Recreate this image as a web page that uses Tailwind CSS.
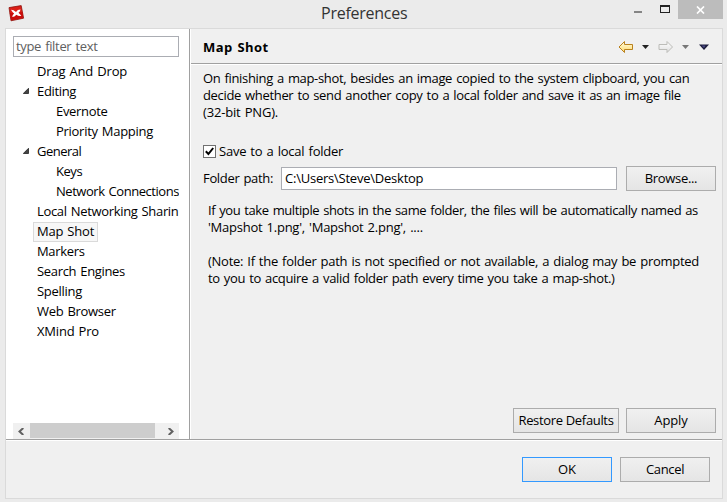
<!DOCTYPE html>
<html lang="en">
<head>
<meta charset="utf-8">
<title>Preferences</title>
<script src="https://cdn.jsdelivr.net/npm/@tailwindcss/browser@4"></script>
</head>
<body class="w-[727px] h-[502px] overflow-hidden bg-[#ebebeb] text-black text-[13px] tracking-[-0.33px] [word-spacing:1px] font-['Open_Sans','Noto_Sans',sans-serif]">
<div class="flex flex-col w-[727px] h-[502px]">
  <header class="flex h-[28px] shrink-0">
    <div class="w-[321px] pl-[8px] pt-[5px]">
      <svg width="17" height="17" viewBox="0 0 17 17">
        <path d="M1 2.600 13.200.6 15.600 13.200 3 15.800z" fill="#dc1f18" stroke="#8d1712" stroke-width=".8"/>
        <path d="M1.700 8.200 14.500 7 15.200 12.900 3.300 15.200z" fill="#c90d0b"/>
        <path d="M3 4.700q2.600 0 5 2.200Q9.700 4.500 12.500 4.600q-.4 2.200-2 3.200 1.600 1.500 2.800 3.100-3.100.4-4.900-1.100Q6.500 12 4.200 12q.3-2.300 1.900-3.500Q4.200 6.900 3 4.700z" fill="#fff"/>
      </svg>
    </div>
    <h1 class="flex-1 text-[16px] leading-[27px] tracking-[-0.25px] text-[#333]">Preferences</h1>
    <div class="flex">
      <svg class="mr-[5px]" width="40" height="20" viewBox="0 0 40 20" shape-rendering="crispEdges"><path d="M1 11h8v2H1z" fill="#858585"/><path d="M27 5h10v8H27zM28 7v5h8V7z" fill="#222" fill-rule="evenodd"/></svg>
      <div class="mr-[4px] flex h-[19px] w-[45px] items-center justify-center bg-[#bcbcbc]">
        <svg width="9" height="8" viewBox="0 0 9 8"><path d="M1 .5 8 7.500M8 .5 1 7.500" stroke="#fff" stroke-width="1.700"/></svg>
      </div>
    </div>
  </header>

  <main class="ml-[5px] flex h-[471px] w-[718px] flex-col border border-[#dadada] bg-[#f0f0f0]">
    <div class="flex h-[410px] shrink-0">
      <aside class="flex w-[184px] shrink-0 flex-col border-r border-[#a0a0a0] bg-white pl-[7px] pt-[7px]">
        <div class="h-[21px] w-[166px] border border-[#abadb3] pl-[2px] leading-[19px] text-[#606060]">type filter text</div>
        <ul class="mt-[4px] h-[362px] w-[166px] overflow-hidden whitespace-nowrap leading-[20px]">
          <li class="pl-[24px] tracking-[-0.18px]">Drag And Drop</li>
          <li class="flex items-center pl-[10px]"><svg class="mr-[8px]" width="6" height="6" viewBox="0 0 6 6"><path d="M5.500.3v5.200H.3z" fill="#444" stroke="#222" stroke-width=".8"/></svg>Editing</li>
          <li class="pl-[43px]">Evernote</li>
          <li class="pl-[43px] tracking-[-0.28px]">Priority Mapping</li>
          <li class="flex items-center pl-[10px] tracking-[-0.5px]"><svg class="mr-[8px]" width="6" height="6" viewBox="0 0 6 6"><path d="M5.500.3v5.200H.3z" fill="#444" stroke="#222" stroke-width=".8"/></svg>General</li>
          <li class="pl-[43px] tracking-[-0.45px]">Keys</li>
          <li class="pl-[43px] tracking-[-0.45px]">Network Connections</li>
          <li class="pl-[24px]">Local Networking Sharin</li>
          <li class="h-[20px] pt-px pl-[20px] tracking-[-0.22px]"><span class="block h-[20px] w-[65px] border border-[#dadada] bg-[#f7f7f7] pl-[3px] leading-[16px]">Map Shot</span></li>
          <li class="pl-[24px]">Markers</li>
          <li class="pl-[24px]">Search Engines</li>
          <li class="pl-[24px] tracking-[-0.28px]">Spelling</li>
          <li class="pl-[24px] tracking-[-0.3px]">Web Browser</li>
          <li class="pl-[24px] tracking-[-0.2px]">XMind Pro</li>
        </ul>
        <div class="flex h-[16px] w-[166px] bg-[#f0f0f0]">
          <div class="flex w-[17px] shrink-0 items-center pl-[5px]"><svg width="6" height="7" viewBox="0 0 6 7"><path d="M5.300 0 1.500 3.500 5.300 7" fill="none" stroke="#606060" stroke-width="2"/></svg></div>
          <div class="h-[15px] w-[125px] bg-[#cdcdcd]"></div>
          <div class="flex flex-1 items-center justify-end pr-[5px]"><svg width="6" height="7" viewBox="0 0 6 7"><path d="M.7 0 4.500 3.500.7 7" fill="none" stroke="#606060" stroke-width="2"/></svg></div>
        </div>
      </aside>

      <section class="flex flex-1 flex-col border-l border-white whitespace-nowrap">
        <div class="flex h-[35px] shrink-0 items-center justify-between border-b border-[#a0a0a0] pl-[12px] pr-[12px]">
          <h2 class="pt-[3px] text-[13px] font-bold tracking-[0.45px]">Map Shot</h2>
          <svg class="mt-[2px]" width="92" height="14" viewBox="0 0 92 14">
            <defs>
              <linearGradient id="gold" x2="0" y2="1"><stop stop-color="#fffde5"/><stop offset="1" stop-color="#ffda68"/></linearGradient>
              <linearGradient id="gray" x2="0" y2="1"><stop stop-color="#fff"/><stop offset="1" stop-color="#dedede"/></linearGradient>
            </defs>
            <path d="M1 7 6.500 1.500v3h8v5h-8v3z" fill="url(#gold)" stroke="#b9811e"/>
            <path d="M24 5h7l-3.500 4z" fill="#222"/>
            <path d="M54.500 7 49 1.500v3h-8v5h8v3z" fill="url(#gray)" stroke="#bcbcb8"/>
            <path d="M64 5h7l-3.500 4z" fill="#777"/>
            <path d="M81 4.500h10L86 10z" fill="#1c1c3c"/><path d="M83.500 5.500h4L86 8z" fill="#494985"/>
          </svg>
        </div>
        <div class="h-px shrink-0 bg-white"></div>
        <div class="flex flex-1 flex-col pl-[12px] pr-[6px] pt-[5px] pb-[6px]">
          <p class="leading-[17px]">On finishing a map-shot, besides an image copied to the system clipboard, you can<br>decide whether to send another copy to a local folder and save it as an image file<br><span class="tracking-[-0.18px]">(32-bit PNG).</span></p>
          <div class="mt-[22px] flex h-[17px] items-center tracking-[-0.23px]">
            <span class="mr-[3px] flex h-[13px] w-[13px] items-center justify-center border border-[#707070] bg-white"><svg width="9" height="9" viewBox="0 0 9 9"><path d="M.8 4.300 3.400 7 8.200 1" fill="none" stroke="#000" stroke-width="2"/></svg></span>
            <label>Save to a local folder</label>
          </div>
          <div class="mt-[6px] flex h-[25px] items-center">
            <label class="w-[78px]">Folder path:</label>
            <div class="h-[23px] w-[336px] border border-[#abadb3] bg-white pl-[3px] leading-[21px] tracking-[-0.23px]">C:\Users\Steve\Desktop</div>
            <button class="ml-[9px] h-[25px] w-[90px] border border-[#acacac] bg-linear-to-b from-[#f0f0f0] to-[#e5e5e5]">Browse...</button>
          </div>
          <div class="mt-[11px] pl-[5px] leading-[17px]">
            <p><span class="tracking-[-0.4px]">If you take multiple shots in the same folder, the files will be automatically named as</span><br><span class="tracking-[-0.24px]">'Mapshot 1.png', 'Mapshot 2.png', ....</span></p>
            <p class="mt-[17px]"><span class="tracking-[-0.27px]">(Note: If the folder path is not specified or not available, a dialog may be prompted</span><br>to you to acquire a valid folder path every time you take a map-shot.)</p>
          </div>
          <div class="mt-auto flex justify-end gap-[7px]">
            <button class="h-[25px] w-[106px] border border-[#acacac] bg-linear-to-b from-[#f0f0f0] to-[#e5e5e5]">Restore Defaults</button>
            <button class="h-[25px] w-[90px] border border-[#acacac] bg-linear-to-b from-[#f0f0f0] to-[#e5e5e5] tracking-[-0.1px]">Apply</button>
          </div>
        </div>
      </section>
    </div>
    <footer class="flex flex-1 items-start justify-end gap-[8px] border-t border-[#a0a0a0] pr-[12px] pt-[17px] shadow-[inset_0_1px_0_#fff]">
      <button class="h-[25px] w-[90px] border border-[#3399ff] bg-linear-to-b from-[#f0f0f0] to-[#e5e5e5] tracking-normal">OK</button>
      <button class="h-[25px] w-[90px] border border-[#acacac] bg-linear-to-b from-[#f0f0f0] to-[#e5e5e5]">Cancel</button>
    </footer>
  </main>
</div>
</body>
</html>
